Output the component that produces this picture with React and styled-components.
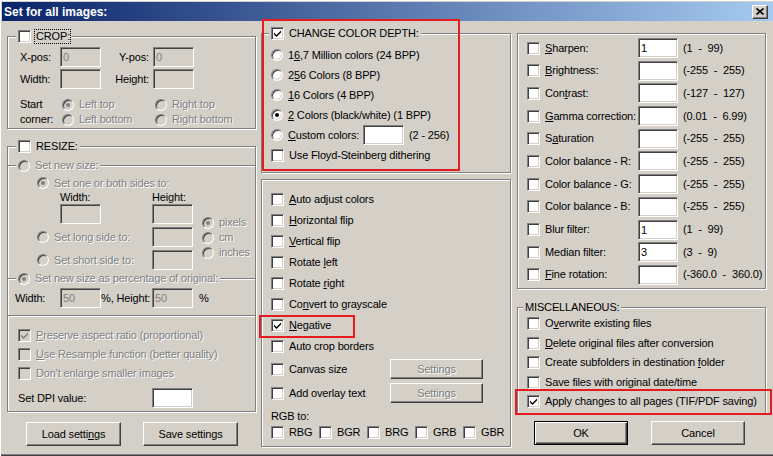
import React from 'react';
import styled, { createGlobalStyle } from 'styled-components';

const FACE = '#d4d0c8';
const SHADOW = '#808080';
const DARK = '#404040';
const FONT = '"Liberation Sans", Arial, sans-serif';

const GlobalStyle = createGlobalStyle`
  html, body { margin: 0; padding: 0; background: ${FACE}; }
  body {
    font-family: ${FONT};
    font-size: 11px;
    letter-spacing: -0.15px;
    color: #000;
  }
  * { box-sizing: border-box; }
`;

const Window = styled.div`
  position: relative;
  width: 773px;
  height: 456px;
  overflow: hidden;
  background: ${FACE};
  padding: 2px 0 0 2px;
  box-shadow: inset 1px 1px #fff, inset 0 -1px ${DARK}, inset 0 -2px ${SHADOW};
`;

const TitleBar = styled.div`
  height: 19px;
  display: flex;
  align-items: center;
  justify-content: space-between;
  padding: 0 5px 0 2px;
  background: linear-gradient(90deg, #0a246a, #a6caf0);
  color: #fff;
  font-weight: bold;
  font-size: 12px;
  letter-spacing: 0;
`;

const CloseButton = styled.div`
  width: 16px;
  height: 14px;
  display: flex;
  align-items: center;
  justify-content: center;
  background: ${FACE};
  border: 1px solid;
  border-color: #fff ${DARK} ${DARK} #fff;
  box-shadow: inset -1px -1px ${SHADOW};
`;

const Client = styled.div`
  display: flex;
  align-items: flex-start;
  padding: 12px 0 0 5px;
`;

const Column = styled.div`
  flex: none;
  width: ${(p) => p.$w}px;
  margin-left: ${(p) => p.$ml || 0}px;
  padding-top: ${(p) => p.$pt || 0}px;
  display: flex;
  flex-direction: column;
`;

const Group = styled.div`
  position: relative;
  width: calc(100% - 1px);
  height: ${(p) => p.$h}px;
  margin-top: ${(p) => p.$mt || 0}px;
  padding: ${(p) => p.$pad || '0'};
  border: 1px solid ${SHADOW};
  box-shadow: inset 1px 1px #fff, 1px 1px #fff;
`;

const SubGroup = styled.div`
  position: relative;
  margin-top: ${(p) => p.$mt || 0}px;
  padding: ${(p) => p.$pad || '0'};
  border-top: 1px solid ${SHADOW};
  box-shadow: inset 0 1px #fff;
`;

const Legend = styled.div`
  position: absolute;
  top: -7px;
  left: ${(p) => p.$left}px;
  height: 13px;
  padding: 0 2px;
  display: flex;
  align-items: center;
  gap: ${(p) => p.$gap || 5}px;
  background: ${FACE};
  line-height: 13px;
`;

const Text = styled.span`
  display: inline-block;
  white-space: pre;
  width: ${(p) => (p.$w ? `${p.$w}px` : 'auto')};
  margin-left: ${(p) => p.$ml || 0}px;
  text-align: ${(p) => (p.$right ? 'right' : 'left')};
  padding-right: ${(p) => (p.$right ? 4 : 0)}px;
  padding-left: ${(p) => (p.$focus ? 1 : 0)}px;
  color: ${(p) => (p.$off ? SHADOW : '#000')};
  text-shadow: ${(p) => (p.$off ? '1px 1px 0 #fff' : 'none')};
  outline: ${(p) => (p.$focus ? '1px dotted #000' : 'none')};
  line-height: 13px;
`;

const CheckBox = styled.span`
  flex: none;
  width: 13px;
  height: 13px;
  display: inline-flex;
  align-items: center;
  justify-content: center;
  border: 1px solid;
  border-color: ${SHADOW} #fff #fff ${SHADOW};
  box-shadow: inset 1px 1px ${DARK}, inset -1px -1px ${FACE};
  background: ${(p) => (p.$off ? FACE : '#fff')};
`;

const RadioDot = styled.span`
  position: relative;
  flex: none;
  width: 12px;
  height: 12px;
  border-radius: 50%;
  border: 1px solid;
  border-color: ${SHADOW} #fff #fff ${SHADOW};
  box-shadow: inset 1px 1px ${DARK}, inset -1px -1px ${FACE};
  background: ${(p) => (p.$off ? FACE : '#fff')};
  &::after {
    content: '';
    display: ${(p) => (p.$on ? 'block' : 'none')};
    position: absolute;
    left: 3px;
    top: 3px;
    width: 4px;
    height: 4px;
    border-radius: 50%;
    background: ${(p) => (p.$off ? SHADOW : '#000')};
  }
`;

const Field = styled.input.attrs({ type: 'text', readOnly: true })`
  flex: none;
  width: ${(p) => p.$w || 41}px;
  height: 20px;
  margin: 0;
  padding: 0 2px;
  border: 1px solid;
  border-color: ${SHADOW} #fff #fff ${SHADOW};
  box-shadow: inset 1px 1px ${DARK}, inset -1px -1px ${FACE};
  background: ${(p) => (p.$off ? FACE : '#fff')};
  color: ${(p) => (p.$off ? SHADOW : '#000')};
  font: 11px ${FONT};
  outline: none;
`;

const Button = styled.button`
  flex: none;
  width: ${(p) => p.$w}px;
  height: ${(p) => p.$h || 24}px;
  padding: 0;
  background: ${FACE};
  border: 1px solid;
  border-color: ${(p) => (p.$default ? '#000' : `#fff ${DARK} ${DARK} #fff`)};
  box-shadow: ${(p) =>
    p.$default
      ? `inset 1px 1px #fff, inset -1px -1px ${DARK}, inset -2px -2px ${SHADOW}`
      : `inset -1px -1px ${SHADOW}`};
  font: 11px ${FONT};
  letter-spacing: -0.15px;
  color: ${(p) => (p.$off ? SHADOW : '#000')};
  text-shadow: ${(p) => (p.$off ? '1px 1px 0 #fff' : 'none')};
`;

const Item = styled.div`
  display: flex;
  align-items: center;
  gap: 5px;
`;

const OptionList = styled.div`
  display: grid;
  grid-auto-rows: ${(p) => p.$row}px;
  align-items: center;
`;

const FieldGrid = styled.div`
  display: grid;
  grid-template-columns: 40px 41px 52px 41px;
  grid-auto-rows: 20px;
  row-gap: 2px;
  align-items: center;
  padding: 10px 0 0 12px;
`;

const CornerGrid = styled.div`
  display: grid;
  grid-template-columns: 42px 93px auto;
  grid-auto-rows: 15px;
  align-items: center;
  margin-top: 8px;
  padding-left: 12px;
`;

const SizeGrid = styled.div`
  display: grid;
  grid-template-columns: 23px 92px 50px 1fr;
  grid-template-rows: 14px 14px 20px 23px 23px;
  align-items: center;
`;

const Cell = styled.div`
  grid-column: ${(p) => p.$col};
  grid-row: ${(p) => p.$row};
  align-self: ${(p) => (p.$end ? 'end' : 'center')};
  display: flex;
  align-items: center;
  height: ${(p) => (p.$end ? '20px' : 'auto')};
`;

const UnitStack = styled.div`
  grid-column: 4;
  grid-row: 3 / 6;
  align-self: start;
  padding-top: 11px;
  display: grid;
  grid-auto-rows: 15px;
  align-items: center;
`;

const PercentRow = styled.div`
  display: grid;
  grid-template-columns: 45px 41px 51px 41px auto;
  height: 20px;
  align-items: center;
`;

const InlineRow = styled.div`
  display: flex;
  align-items: center;
  height: 20px;
  margin-top: ${(p) => p.$mt || 0}px;
`;

const SettingsRow = styled.div`
  display: grid;
  grid-template-columns: 119px 93px;
  height: 20px;
  align-items: center;
  margin-top: ${(p) => p.$mt}px;
`;

const RgbLabel = styled.div`
  height: 14px;
  margin-top: 6px;
  display: flex;
  align-items: center;
`;

const RgbRow = styled.div`
  display: grid;
  grid-template-columns: repeat(5, 48px);
  height: 14px;
  margin-top: 2px;
  align-items: center;
`;

const AdjustList = styled.div`
  display: flex;
  flex-direction: column;
  gap: 2.7px;
`;

const ButtonRow = styled.div`
  display: flex;
  gap: ${(p) => p.$gap}px;
  padding-left: ${(p) => p.$pl}px;
  margin-top: ${(p) => p.$mt}px;
`;

const Highlight = styled.div`
  position: absolute;
  left: ${(p) => p.$x}px;
  top: ${(p) => p.$y}px;
  width: ${(p) => p.$w}px;
  height: ${(p) => p.$h}px;
  border: 2px solid #e41b1f;
  pointer-events: none;
`;

function Check({ checked, off }) {
  return (
    <CheckBox $off={off}>
      {checked && (
        <svg width="9" height="9" viewBox="0 0 9 9">
          <path d="M1 3.5 L3.5 6 L8 1.5 L8 3.5 L3.5 8 L1 5.5 Z" fill={off ? SHADOW : '#000'} />
        </svg>
      )}
    </CheckBox>
  );
}

function CheckItem({ checked, off, children }) {
  return (
    <Item>
      <Check checked={checked} off={off} />
      <Text $off={off}>{children}</Text>
    </Item>
  );
}

function RadioItem({ on, off, children }) {
  return (
    <Item>
      <RadioDot $on={on} $off={off} />
      <Text $off={off}>{children}</Text>
    </Item>
  );
}

const adjustments = [
  [<><u>S</u>harpen:</>, '1', '(1  -  99)'],
  [<><u>B</u>rightness:</>, '', '(-255  -  255)'],
  [<>Con<u>t</u>rast:</>, '', '(-127  -  127)'],
  [<><u>G</u>amma correction:</>, '', '(0.01  -  6.99)'],
  [<>S<u>a</u>turation</>, '', '(-255  -  255)'],
  ['Color balance - R:', '', '(-255  -  255)'],
  ['Color balance - G:', '', '(-255  -  255)'],
  ['Color balance - B:', '', '(-255  -  255)'],
  ['Blur filter:', '1', '(1  -  99)'],
  ['Median filter:', '3', '(3  -  9)'],
  [<><u>F</u>ine rotation:</>, '', '(-360.0  -  360.0)'],
];

export default function App() {
  return (
    <>
      <GlobalStyle />
      <Window>
        <TitleBar>
          <span>Set for all images:</span>
          <CloseButton>
            <svg width="8" height="7" viewBox="0 0 8 7">
              <path d="M0.5 0.5 L7.5 6.5 M7.5 0.5 L0.5 6.5" stroke="#000" strokeWidth="1.6" />
            </svg>
          </CloseButton>
        </TitleBar>

        <Client>
          {/* left column: crop / resize */}
          <Column $w={250} $pt={3}>
            <Group $h={93}>
              <Legend $left={8} $gap={4}>
                <Check />
                <Text $focus>CROP:</Text>
              </Legend>
              <FieldGrid>
                <Text>X-pos:</Text>
                <Field $off defaultValue="0" />
                <Text $right>Y-pos:</Text>
                <Field $off defaultValue="0" />
                <Text>Width:</Text>
                <Field $off />
                <Text $right>Height:</Text>
                <Field $off />
              </FieldGrid>
              <CornerGrid>
                <Text>Start</Text>
                <RadioItem on off>Left top</RadioItem>
                <RadioItem off>Right top</RadioItem>
                <Text>corner:</Text>
                <RadioItem off>Left bottom</RadioItem>
                <RadioItem off>Right bottom</RadioItem>
              </CornerGrid>
            </Group>

            <Group $h={170} $mt={17}>
              <Legend $left={8}>
                <Check />
                <Text>RESIZE:</Text>
              </Legend>
              <SubGroup $mt={18} $pad="10px 0 8px 29px">
                <Legend $left={8}>
                  <RadioDot $off />
                  <Text $off>Set new size:</Text>
                </Legend>
                <SizeGrid>
                  <Cell $col="1 / 5" $row="1">
                    <RadioItem on off>Set one or both sides to:</RadioItem>
                  </Cell>
                  <Cell $col="2" $row="2"><Text>Width:</Text></Cell>
                  <Cell $col="3" $row="2"><Text>Height:</Text></Cell>
                  <Cell $col="2" $row="3"><Field $off /></Cell>
                  <Cell $col="3" $row="3"><Field $off /></Cell>
                  <UnitStack>
                    <RadioItem on off>pixels</RadioItem>
                    <RadioItem off>cm</RadioItem>
                    <RadioItem off>inches</RadioItem>
                  </UnitStack>
                  <Cell $col="1 / 3" $row="4" $end>
                    <RadioItem off>Set long side to:</RadioItem>
                  </Cell>
                  <Cell $col="3" $row="4" $end><Field $off /></Cell>
                  <Cell $col="1 / 3" $row="5" $end>
                    <RadioItem off>Set short side to:</RadioItem>
                  </Cell>
                  <Cell $col="3" $row="5" $end><Field $off /></Cell>
                </SizeGrid>
              </SubGroup>
              <SubGroup $pad="9px 0 0 7px">
                <Legend $left={8}>
                  <RadioDot $on $off />
                  <Text $off>Set new size as percentage of original:</Text>
                </Legend>
                <PercentRow>
                  <Text>Width:</Text>
                  <Field $off defaultValue="50" />
                  <Text>%, Height:</Text>
                  <Field $off defaultValue="50" />
                  <Text $ml={6}>%</Text>
                </PercentRow>
              </SubGroup>
            </Group>

            <Group $h={97} $mt={-1} $pad="10px 0 0 10px">
              <OptionList $row={19}>
                <CheckItem checked off><u>P</u>reserve aspect ratio (proportional)</CheckItem>
                <CheckItem off><u>U</u>se Resample function (better quality)</CheckItem>
                <CheckItem off>Don't enlarge smaller images</CheckItem>
              </OptionList>
              <InlineRow $mt={5}>
                <Text $w={134}>Set DPI value:</Text>
                <Field />
              </InlineRow>
            </Group>

            <ButtonRow $mt={10} $pl={19} $gap={22}>
              <Button $w={95}>Load setti<u>n</u>gs</Button>
              <Button $w={95}>Save settings</Button>
            </ButtonRow>
          </Column>

          {/* centre column: colour depth and simple operations */}
          <Column $w={251} $ml={4}>
            <Group $h={140} $pad="11px 0 0 9px">
              <Legend $left={7}>
                <Check checked />
                <Text>CHANGE COLOR DEPTH:</Text>
              </Legend>
              <OptionList $row={20}>
                <RadioItem>1<u>6</u>,7 Million colors (24 BPP)</RadioItem>
                <RadioItem>2<u>5</u>6 Colors (8 BPP)</RadioItem>
                <RadioItem><u>1</u>6 Colors (4 BPP)</RadioItem>
                <RadioItem on><u>2</u> Colors (black/white) (1 BPP)</RadioItem>
                <Item>
                  <RadioDot />
                  <Text $w={70}><u>C</u>ustom colors:</Text>
                  <Field />
                  <Text>(2 - 256)</Text>
                </Item>
                <CheckItem>Use Floyd-Steinberg dithering</CheckItem>
              </OptionList>
            </Group>

            <Group $h={268} $mt={6} $pad="9px 0 0 9px">
              <OptionList $row={21}>
                <CheckItem><u>A</u>uto adjust colors</CheckItem>
                <CheckItem><u>H</u>orizontal flip</CheckItem>
                <CheckItem><u>V</u>ertical flip</CheckItem>
                <CheckItem>Rotate <u>l</u>eft</CheckItem>
                <CheckItem>Rotate <u>r</u>ight</CheckItem>
                <CheckItem>Co<u>n</u>vert to grayscale</CheckItem>
                <CheckItem checked><u>N</u>egative</CheckItem>
                <CheckItem>Auto crop borders</CheckItem>
              </OptionList>
              <SettingsRow $mt={2}>
                <CheckItem>Canvas size</CheckItem>
                <Button $w={93} $h={20} $off>Settings</Button>
              </SettingsRow>
              <SettingsRow $mt={4}>
                <CheckItem>Add overlay text</CheckItem>
                <Button $w={93} $h={20} $off>Settings</Button>
              </SettingsRow>
              <RgbLabel><Text>RGB to:</Text></RgbLabel>
              <RgbRow>
                {['RBG', 'BGR', 'BRG', 'GRB', 'GBR'].map((c) => (
                  <CheckItem key={c}>{c}</CheckItem>
                ))}
              </RgbRow>
            </Group>
          </Column>

          {/* right column: filters and misc */}
          <Column $w={250} $ml={5}>
            <Group $h={256} $pad="4px 0 0 9px">
              <AdjustList>
                {adjustments.map(([label, value, range], i) => (
                  <InlineRow key={i}>
                    <Check />
                    <Text $w={93} $ml={5}>{label}</Text>
                    <Field $w={40} defaultValue={value} />
                    <Text $ml={5}>{range}</Text>
                  </InlineRow>
                ))}
              </AdjustList>
            </Group>

            <Group $h={107} $mt={18} $pad="6px 0 0 9px">
              <Legend $left={5}>
                <Text>MISCELLANEOUS:</Text>
              </Legend>
              <OptionList $row={19.5}>
                <CheckItem>O<u>v</u>erwrite existing files</CheckItem>
                <CheckItem><u>D</u>elete original files after conversion</CheckItem>
                <CheckItem>Create subfolders in destination <u>f</u>older</CheckItem>
                <CheckItem>Save files with original date/time</CheckItem>
                <CheckItem checked>Apply changes to all pages (TIF/PDF saving)</CheckItem>
              </OptionList>
            </Group>

            <ButtonRow $mt={7} $pl={17} $gap={23}>
              <Button $w={94} $default>OK</Button>
              <Button $w={94}>Cancel</Button>
            </ButtonRow>
          </Column>
        </Client>

        <Highlight $x={262} $y={19} $w={198} $h={152} />
        <Highlight $x={259} $y={315} $w={96} $h={23} />
        <Highlight $x={515} $y={389} $w={257} $h={26} />
      </Window>
    </>
  );
}
